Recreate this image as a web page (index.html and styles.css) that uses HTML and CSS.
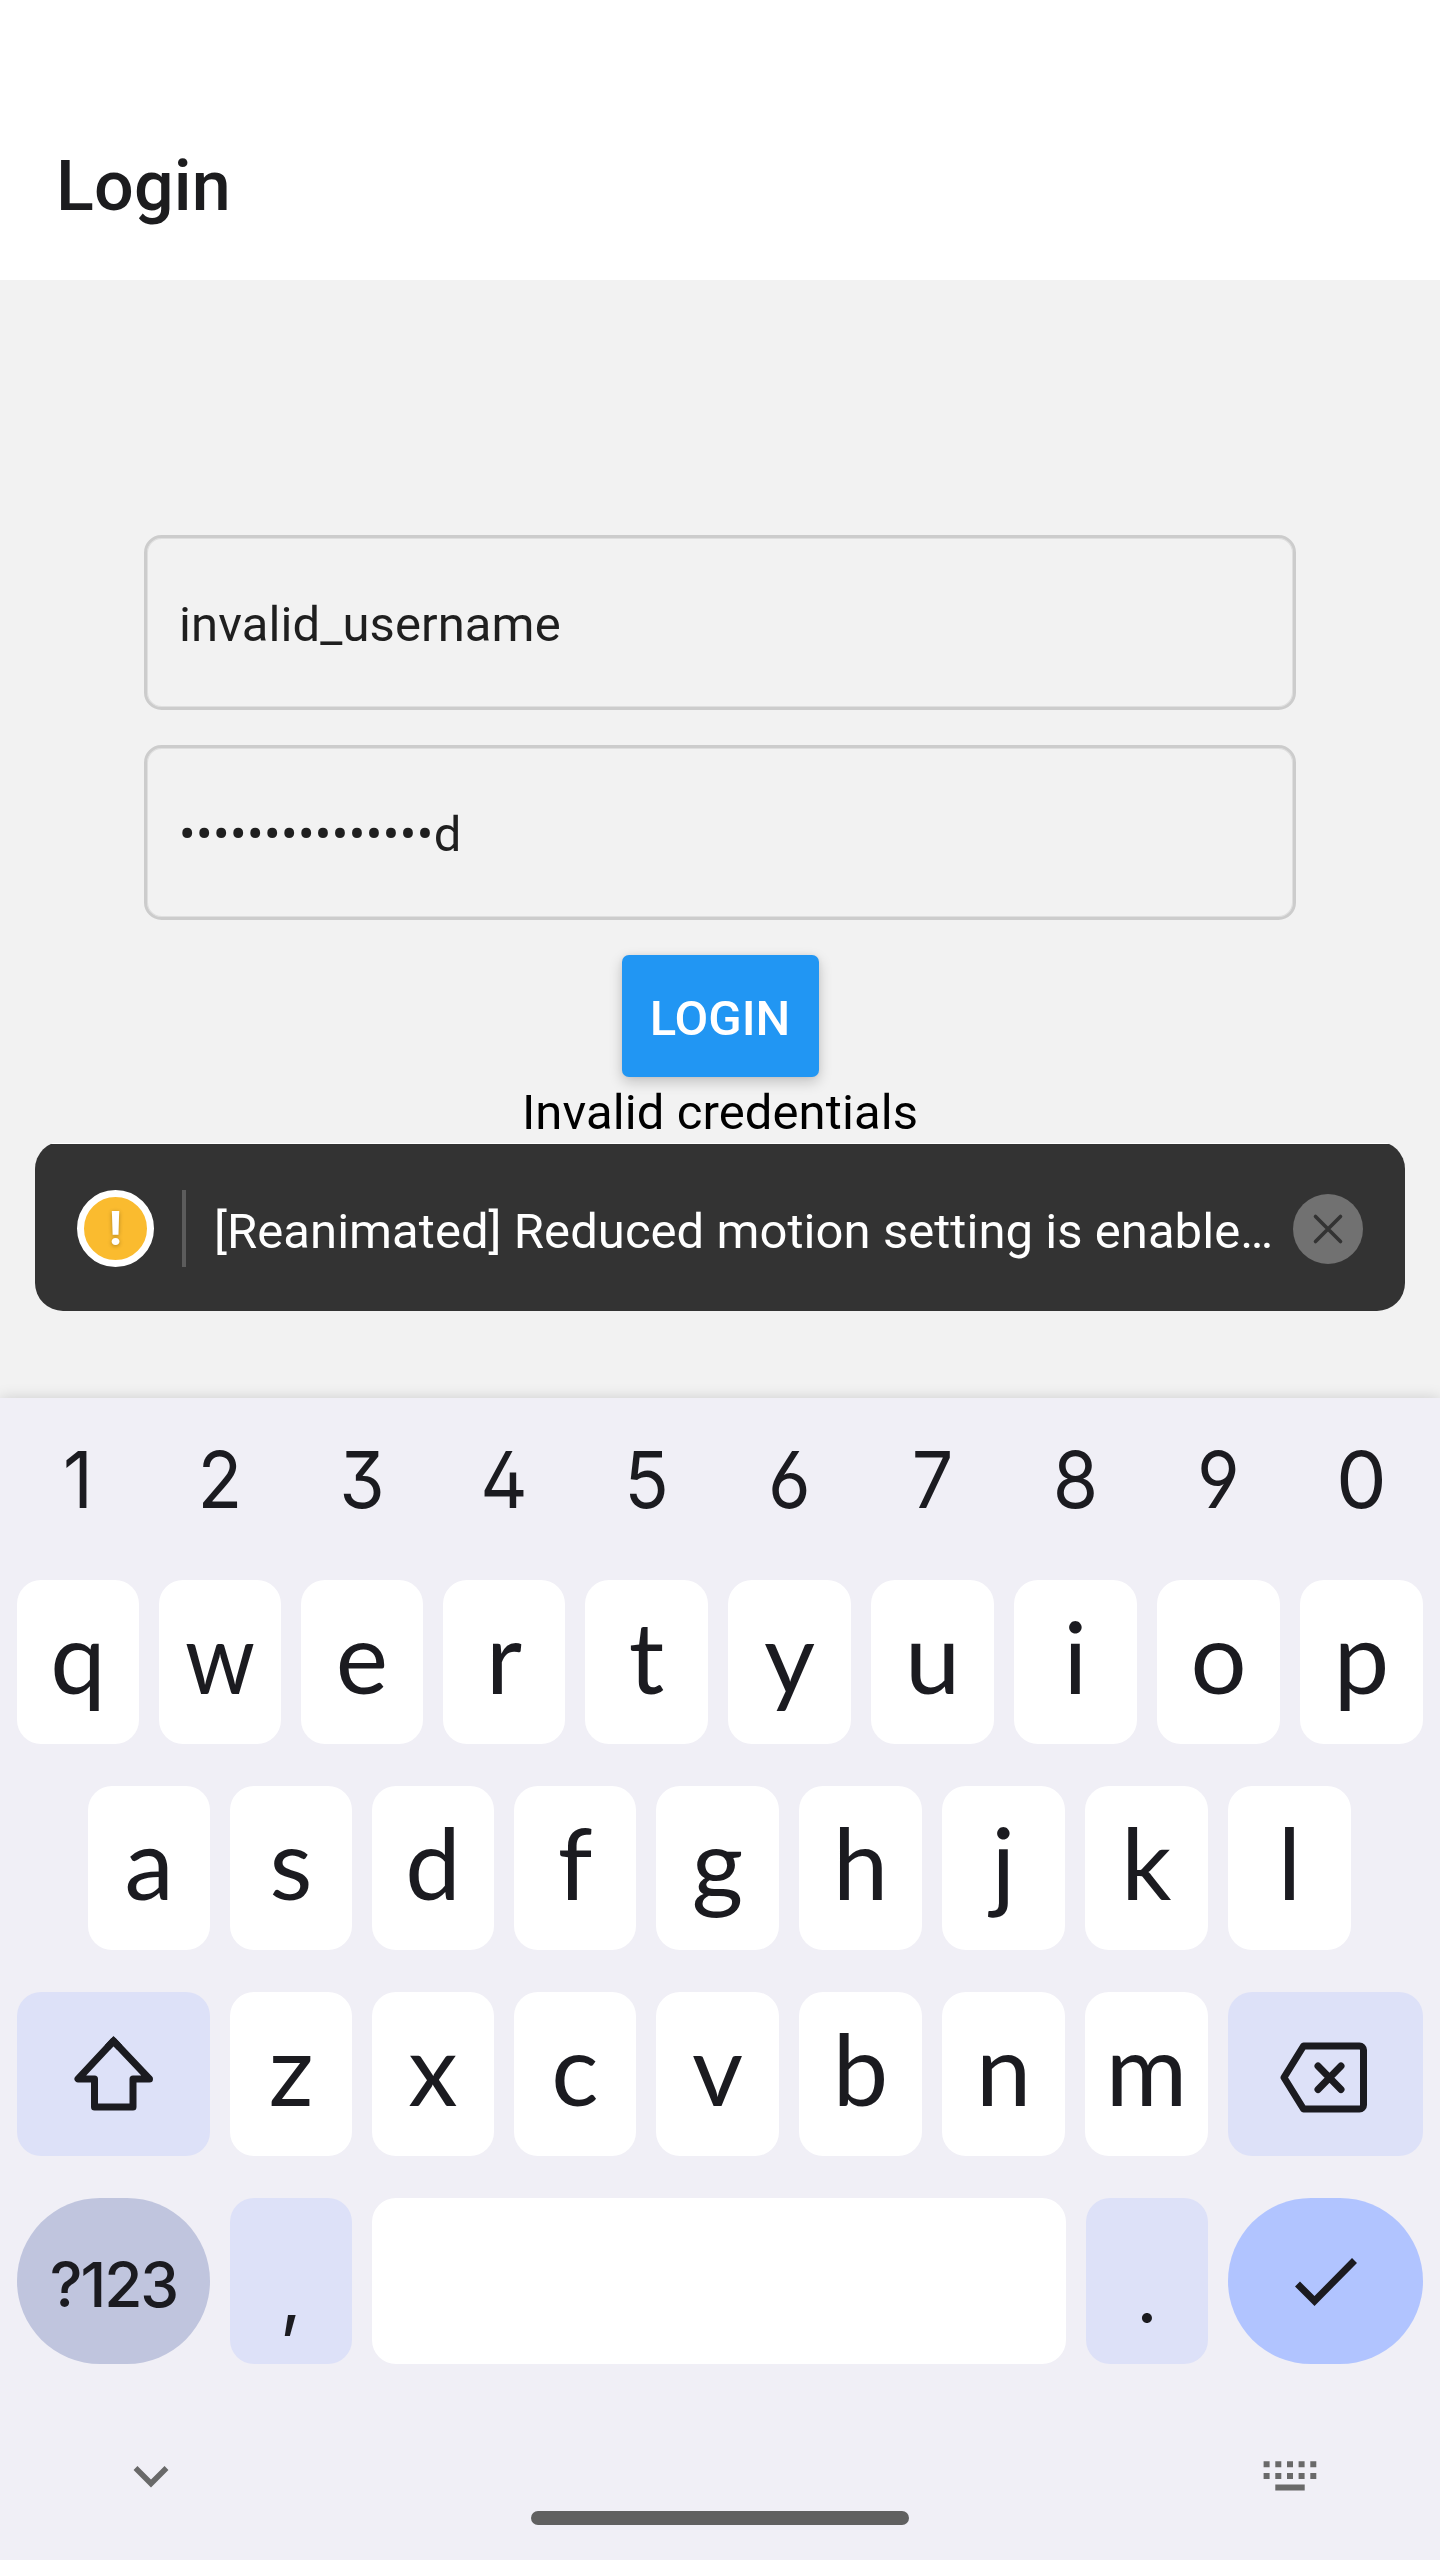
FILE: index.html
```html
<!DOCTYPE html>
<html lang="en">
<head>
<meta charset="utf-8">
<title>Login</title>
<link rel="stylesheet" href="styles.css">
</head>
<body>
<div class="screen">
  <header class="header"><h1 class="title">Login</h1></header>
  <main class="content">
    <div class="field"><span>invalid_username</span></div>
    <div class="field password"><span>•••••••••••••••d</span></div>
    <div class="button">LOGIN</div>
    <p class="message">Invalid credentials</p>
    <div class="toast">
      <span class="warn">!</span>
      <span class="divider"></span>
      <span class="toast-text">[Reanimated] Reduced motion setting is enable…</span>
      <svg class="close" viewBox="0 0 70 70"><circle cx="35" cy="35" r="35" fill="#717171"/><path d="M22.500 22.500l25 25M47.500 22.500l-25 25" stroke="#333" stroke-width="3.600" stroke-linecap="round"/></svg>
    </div>
  </main>
  <section class="keyboard">
    <div class="row digits"><span>1</span><span>2</span><span>3</span><span>4</span><span>5</span><span>6</span><span>7</span><span>8</span><span>9</span><span class="zero">0</span></div>
    <div class="row top"><span class="key">q</span><span class="key"><span class="narrow">w</span></span><span class="key">e</span><span class="key">r</span><span class="key">t</span><span class="key">y</span><span class="key">u</span><span class="key">i</span><span class="key">o</span><span class="key">p</span></div>
    <div class="row home-row"><span class="key">a</span><span class="key">s</span><span class="key">d</span><span class="key">f</span><span class="key">g</span><span class="key">h</span><span class="key">j</span><span class="key">k</span><span class="key">l</span></div>
    <div class="row bottom">
      <span class="key wide tint"><svg width="84" height="84" viewBox="0 0 84 84" fill="none" stroke="#1b1b20" stroke-width="7"><path d="M41.500 9L6 47H22.500V75H61V47H77.500Z" stroke-linejoin="round"/><path d="M35.500 15.400L41.500 9L47.500 15.400"/></svg></span>
      <span class="key">z</span><span class="key">x</span><span class="key">c</span><span class="key">v</span><span class="key">b</span><span class="key">n</span><span class="key">m</span>
      <span class="key wide tint"><svg width="92" height="84" viewBox="0 0 92 84" fill="none" stroke="#1b1b20" stroke-width="7"><path d="M4 45.500L23.500 14H79.500a4 4 0 0 1 4 4V73a4 4 0 0 1-4 4H23.500Z" stroke-linejoin="round"/><path d="M38 34L61 57.500M61 34L38 57.500" stroke-linecap="round"/></svg></span>
    </div>
    <div class="row last">
      <span class="key wide pill symbols">?123</span>
      <span class="key tint punct">,</span>
      <span class="key space"></span>
      <span class="key tint punct">.</span>
      <span class="key wide pill enter"><svg width="84" height="84" viewBox="0 0 84 84" fill="none" stroke="#1b1b20" stroke-width="7"><path d="M13.500 45L30.500 62L70.500 21.500"/></svg></span>
    </div>
    <footer class="nav">
      <svg class="chevron" viewBox="0 0 36 24" fill="none" stroke="#696969" stroke-width="5.500"><path d="M2.500 3L18 18.500L33.500 3"/></svg>
      <span class="home"></span>
      <svg class="switcher" viewBox="0 0 54 30" fill="#696969"><path d="M.6 .3h6v6h-6zM12.300 .3h6v6h-6zM24 .3h6v6h-6zM35.600 .3h6v6h-6zM47.300 .3h6v6h-6zM.6 12h6v6h-6zM12.300 12h6v6h-6zM24 12h6v6h-6zM35.600 12h6v6h-6zM47.300 12h6v6h-6zM12.300 23.400h29.400v6h-29.400z"/></svg>
    </footer>
  </section>
</div>
</body>
</html>
```
FILE: styles.css
```css
* { box-sizing: border-box; }
body { margin: 0; background: #fff; font-family: Roboto, sans-serif; }
.screen { width: 1440px; height: 2560px; display: flex; flex-direction: column; overflow: hidden; }
.header { height: 280px; padding: 92px 56px 0; background: #fff; flex: none; }
.title { margin: 0; height: 188px; line-height: 188px; font-size: 70px; font-weight: 500; letter-spacing: .2px; color: #1c1c1e; }
.content { height: 1118px; flex: none; padding-top: 255px; background: #f2f2f2; display: flex; flex-direction: column; align-items: center; }
.field { width: 1152px; height: 175px; margin-bottom: 35px; padding: 4px 0 0 32px; border: 3px solid #ccc; border-radius: 17.5px; box-shadow: inset 0 0 0 1px rgba(204, 204, 204, .5); display: flex; align-items: center; font-size: 49px; letter-spacing: .1px; color: #1f1f1f; }
.password { letter-spacing: .45px; }
.button { width: 197px; height: 122px; padding-top: 4px; border-radius: 7px; background: #2196f3; color: #fff; font-size: 49px; font-weight: 500; display: flex; align-items: center; justify-content: center; box-shadow: 0 5px 14px rgba(0, 0, 0, .2), 0 0 5px rgba(0, 0, 0, .06); }
.message { margin: 7px 0 -1px; height: 58px; line-height: 58px; font-size: 49px; letter-spacing: .1px; color: #000; }
.toast { width: 1370px; height: 170px; padding: 5px 42px 0; display: flex; align-items: center; border-radius: 28px; background: linear-gradient(#fff 3px, #333 3px); clip-path: inset(2px 0 0); color: #fff; }
.warn { width: 77px; height: 77px; flex: none; border: 7px solid #fff; border-radius: 50%; background: #fabb2f; display: flex; align-items: center; justify-content: center; font-size: 49px; font-weight: 700; line-height: 63px; text-shadow: 0 1px 4px rgba(0, 0, 0, .3); }
.divider { width: 4px; height: 77px; margin: 0 28px; flex: none; background: #5c5c5c; }
.toast-text { flex: 1; padding-top: 6px; white-space: nowrap; font-size: 49px; letter-spacing: .05px; line-height: 60px; }
.close { width: 70px; height: 70px; flex: none; }

.keyboard { position: relative; height: 1162px; flex: none; padding: 0 17px; background: #f0eff6; color: #1b1b20; box-shadow: 0 0 14px rgba(0, 0, 0, .15); }
.row { display: grid; grid-template-rows: 100%; gap: 20px; height: 164px; margin-bottom: 42px; }
.top, .digits { grid-template-columns: repeat(4, 122px) repeat(6, 123px); }
.home-row { padding: 0 71px; grid-template-columns: repeat(4, 122px) repeat(5, 123px); }
.bottom { grid-template-columns: 193px repeat(3, 122px) repeat(4, 123px) 195px; }
.last { height: 166px; grid-template-columns: 193px 122px 694px 122px 195px; }
.digits { height: 182px; margin: 0; font: 79px/162px Inter, sans-serif; font-feature-settings: "ss01"; text-align: center; }
.digits span { transform: scaleX(.93); }
.digits .zero { transform: scaleX(1.02); }
.key { border-radius: 24px; background: #fff; display: flex; align-items: center; justify-content: center; font: 99px/164px Lato, sans-serif; padding-bottom: 12px; }
.narrow { transform: scaleX(.9); }
.wide { padding: 0; }
.tint { background: #dde1f8; }
.pill { border-radius: 83px; }
.symbols { background: #c0c5de; font: 500 62px/166px Inter, sans-serif; letter-spacing: -2px; padding-top: 8px; }
.punct { font: 76px/166px Inter, sans-serif; padding: 28px 0 0; }
.enter { background: #b1c4ff; }
.nav { margin-top: -42px; padding: 0 106px 0 116px; height: 196px; display: grid; grid-template-columns: 36px 1fr 54px; align-items: start; }
.chevron { width: 36px; height: 24px; margin-top: 101px; }
.switcher { width: 54px; height: 30px; margin-top: 97px; }
.home { width: 378px; height: 14px; margin: 147px 0 0 362px; border-radius: 7px; background: #606060; }
```
